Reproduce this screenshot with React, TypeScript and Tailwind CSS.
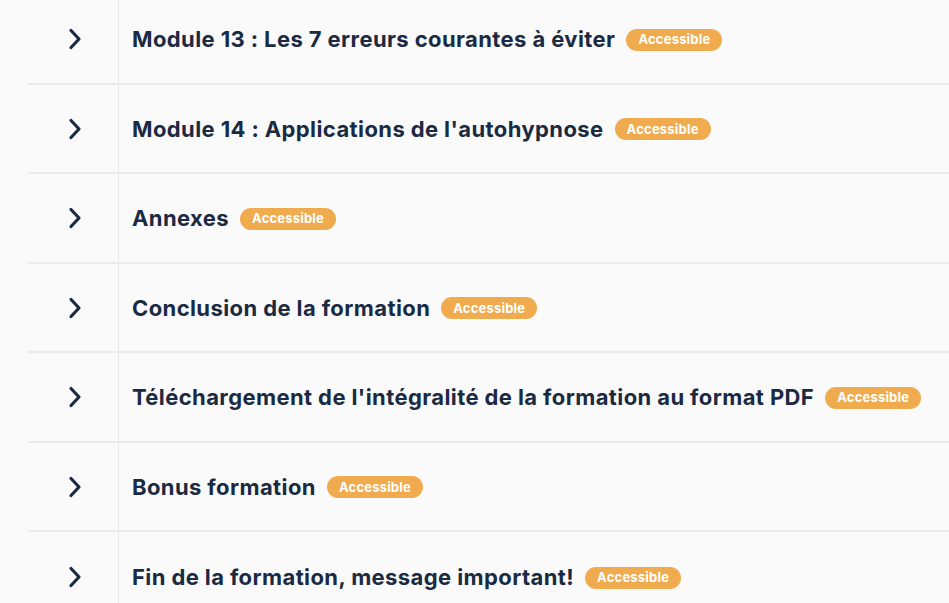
import React from 'react';

const modules = [
  'Module 13 : Les 7 erreurs courantes à éviter',
  "Module 14 : Applications de l'autohypnose",
  'Annexes',
  'Conclusion de la formation',
  "Téléchargement de l'intégralité de la formation au format PDF",
  'Bonus formation',
  'Fin de la formation, message important!',
];

const Chevron: React.FC = () => (
  <svg width="14" height="22" viewBox="0 0 14 22" fill="none">
    <polyline
      points="3,2.5 11,11 3,19.5"
      stroke="#1b2a43"
      strokeWidth="3.2"
      strokeLinecap="round"
      strokeLinejoin="round"
    />
  </svg>
);

const Row: React.FC<{ title: string; last?: boolean }> = ({ title, last }) => (
  <div className={`flex h-[89.5px] ml-[28px] ${last ? '' : 'border-b-2 border-[#ebebeb]'}`}>
    <div className="w-[91px] shrink-0 flex items-center justify-center border-r border-[#e6e6e6] pt-[1px] pl-[3px]">
      <Chevron />
    </div>
    <div className="flex items-center gap-[11px] pl-[13px] pt-[2px] whitespace-nowrap">
      <span className="text-[22px] font-bold text-[#1b2a43] tracking-[0.4px]">{title}</span>
      <span className="bg-[#efab4d] text-white text-[13px] font-bold rounded-full h-[22px] px-[12px] flex items-center tracking-[0.2px]">
        Accessible
      </span>
    </div>
  </div>
);

export default function App() {
  return (
    <div
      className="w-[949px] h-[603px] overflow-hidden bg-[#fafafa]"
      style={{ fontFamily: 'Inter, "Noto Sans", sans-serif' }}
    >
      <div className="-mt-[5px]">
        {modules.map((m, i) => (
          <Row key={m} title={m} last={i === modules.length - 1} />
        ))}
      </div>
    </div>
  );
}
